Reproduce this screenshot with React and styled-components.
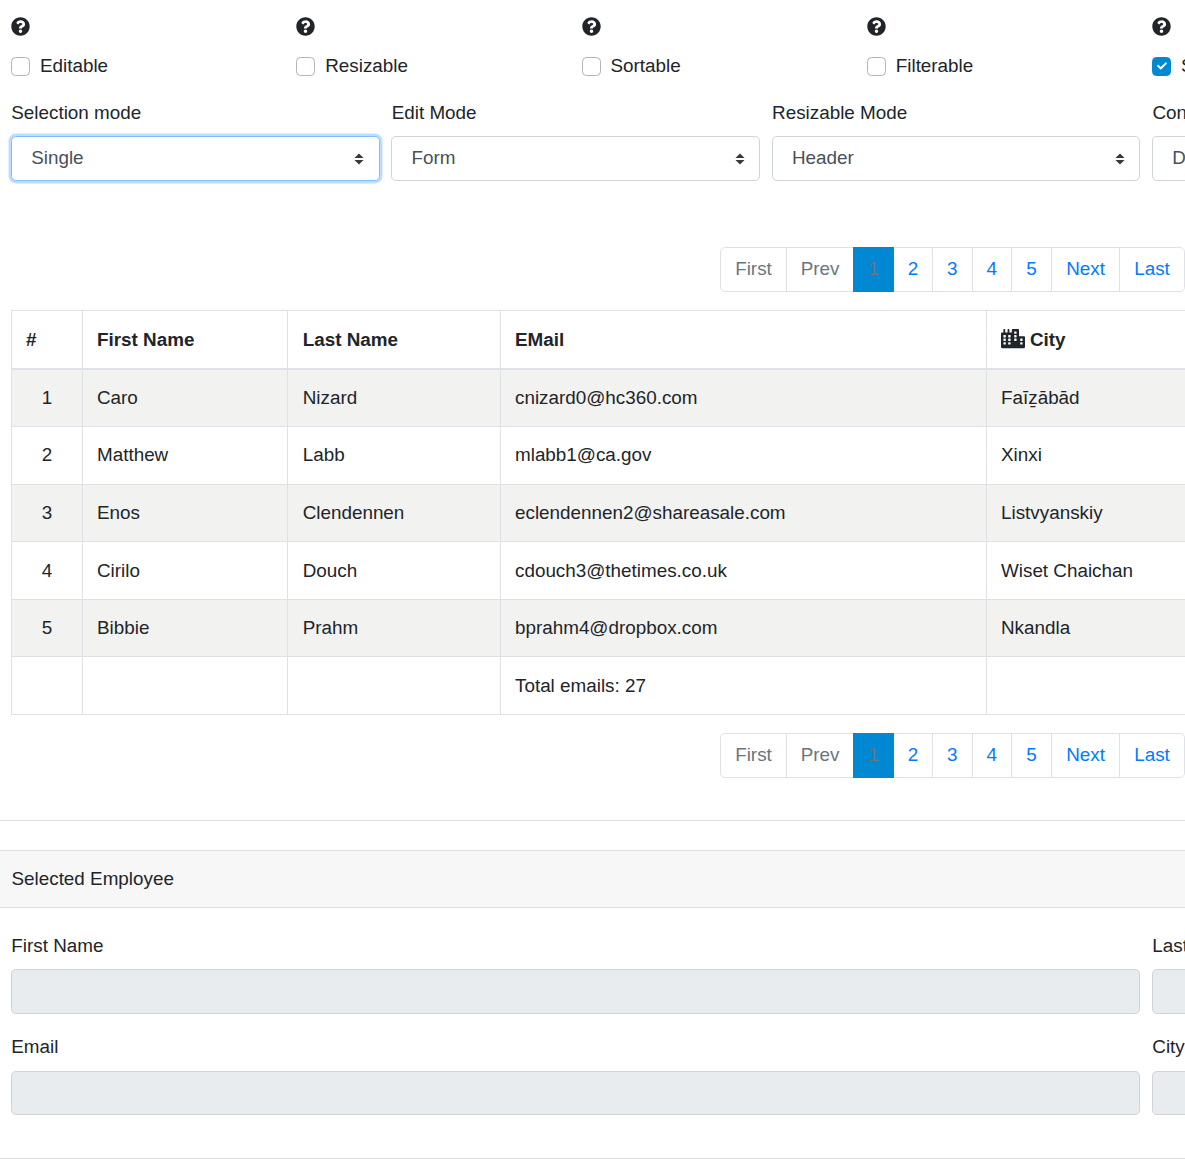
import React from "react";
import styled, { createGlobalStyle } from "styled-components";
import { FaQuestionCircle, FaCity, FaCheck } from "react-icons/fa";

const Global = createGlobalStyle`
  html, body { margin: 0; padding: 0; background: #fff; overflow: hidden; }
  body { font-family: "Liberation Sans", Arial, sans-serif; font-size: 18.85px; line-height: 28.8px; color: #212529; }
`;

const Page = styled.div`
  width: 1185px;
  height: 1166px;
  overflow: hidden;
`;
const OptionGrid = styled.div`
  display: grid;
  grid-template-columns: repeat(6, 285.25px);
  padding: 17px 0 0 11px;
  width: 1711.5px;
`;
const Option = styled.div`
  display: flex;
  flex-direction: column;
  align-items: flex-start;
`;
const Help = styled.span`
  display: flex;
  height: 20px;
  font-size: 19px;
  color: #212529;
  margin-bottom: 14.5px;
`;
const CheckRow = styled.label`
  display: flex;
  align-items: center;
  gap: 10px;
  height: 29px;
`;
const Box = styled.span`
  box-sizing: border-box;
  display: flex;
  align-items: center;
  justify-content: center;
  width: 19px;
  height: 19px;
  border-radius: 4.5px;
  border: 1px solid ${(p) => (p.$on ? "#0088d2" : "#adb5bd")};
  background: ${(p) => (p.$on ? "#0088d2" : "#fff")};
  color: #fff;
  font-size: 10px;
`;
const SelectGrid = styled.div`
  display: grid;
  grid-template-columns: repeat(5, 368.7px);
  column-gap: 11.7px;
  padding: 18px 0 0 11px;
  width: 1900px;
`;
const Field = styled.div`
  display: flex;
  flex-direction: column;
`;
const Label = styled.label`
  display: block;
  height: 29px;
  margin-bottom: 8.5px;
  padding-left: 0.3px;
`;
const Select = styled.div`
  box-sizing: border-box;
  height: 45px;
  display: flex;
  align-items: center;
  justify-content: space-between;
  padding: 0 14.5px 0 19.2px;
  border: 1px solid ${(p) => (p.$focus ? "#80bdff" : "#ced4da")};
  border-radius: 4.8px;
  color: #495057;
  background: #fff;
  box-shadow: ${(p) => (p.$focus ? "0 0 0 2.5px rgba(0,123,255,.25)" : "none")};
`;
const PagerRow = styled.nav`
  display: flex;
  justify-content: flex-end;
  margin-top: ${(p) => p.$top}px;
`;
const PageItem = styled.a`
  box-sizing: border-box;
  width: ${(p) => p.$w}px;
  height: 44.5px;
  display: flex;
  align-items: center;
  justify-content: center;
  border: 1px solid #dee2e6;
  margin-left: -1px;
  background: ${(p) => (p.$active ? "#0088d2" : "#fff")};
  border-color: ${(p) => (p.$active ? "#0088d2" : "#dee2e6")};
  color: ${(p) => (p.$active ? "#6c757d" : p.$off ? "#6c757d" : "#007bff")};
  z-index: ${(p) => (p.$active ? 1 : 0)};
  &:first-child { border-radius: 4.8px 0 0 4.8px; margin-left: 0; }
  &:last-child { border-radius: 0 4.8px 4.8px 0; }
`;
const TableWrap = styled.div`
  margin: 18.5px 0 0 11px;
`;
const Table = styled.table`
  border-collapse: collapse;
  table-layout: fixed;
  width: 1500px;
`;
const Th = styled.th`
  box-sizing: border-box;
  height: 58.5px;
  padding: 1px 14px 0;
  border: 1px solid #dee2e6;
  border-bottom: 2.4px solid #dee2e6;
  text-align: left;
  font-weight: 700;
  font-size: 18.85px;
  background: #fff;
  white-space: nowrap;
  &:nth-child(3) { padding-left: 14.7px; }
`;
const CityIcon = styled.span`
  display: inline-flex;
  vertical-align: -3px;
  margin-right: 5px;
  font-size: 19.2px;
  width: 24px;
  svg { width: 24px; }
`;
const Tr = styled.tr`
  background: ${(p) => (p.$odd ? "#f2f2f0" : "#fff")};
`;
const Td = styled.td`
  box-sizing: border-box;
  height: 57.6px;
  padding: 1px 14px 0;
  border: 1px solid #dee2e6;
  text-align: ${(p) => (p.$center ? "center" : "left")};
  &:nth-child(3) { padding-left: 14.7px; }
`;
const Rule = styled.hr`
  border: 0;
  border-top: 1px solid #dfdfdf;
  margin: ${(p) => p.$top}px 0 0;
  height: 0;
`;
const CardHeader = styled.div`
  box-sizing: border-box;
  height: 58px;
  margin-top: 29px;
  padding: 0 11.5px;
  display: flex;
  align-items: center;
  background: #f7f7f7;
  border-top: 1px solid #dfdfdf;
  border-bottom: 1px solid #dfdfdf;
`;
const FormGrid = styled.div`
  display: grid;
  grid-template-columns: repeat(2, 1129px);
  column-gap: 12px;
  row-gap: 18.5px;
  padding: 24px 0 0 11px;
  width: 2400px;
`;
const FormLabel = styled.label`
  display: block;
  height: 29px;
  margin-bottom: ${(p) => p.$gap}px;
  padding-left: 0.3px;
`;
const ReadOnly = styled.div`
  box-sizing: border-box;
  height: ${(p) => p.$h}px;
  background: #e9ecef;
  border: 1px solid #ced4da;
  border-radius: 4.8px;
`;

const Sort = () => (
  <svg width="10" height="12" viewBox="0 0 10 12" aria-hidden="true">
    <path d="M5 0.5 9.6 5H0.4z M5 11.5 9.6 7H0.4z" fill="#343a40" />
  </svg>
);

const options = [
  ["Editable", false],
  ["Resizable", false],
  ["Sortable", false],
  ["Filterable", false],
  ["Selectable", true],
];
const selects = [
  ["Selection mode", "Single", true],
  ["Edit Mode", "Form", false],
  ["Resizable Mode", "Header", false],
  ["Context Menu", "Disabled", false],
];
const pages = [
  ["First", 67, "off"],
  ["Prev", 68, "off"],
  ["1", 41, "active"],
  ["2", 40],
  ["3", 40.5],
  ["4", 40.5],
  ["5", 41],
  ["Next", 69],
  ["Last", 66],
];
const rows = [
  [1, "Caro", "Nizard", "cnizard0@hc360.com", "Faīẕābād"],
  [2, "Matthew", "Labb", "mlabb1@ca.gov", "Xinxi"],
  [3, "Enos", "Clendennen", "eclendennen2@shareasale.com", "Listvyanskiy"],
  [4, "Cirilo", "Douch", "cdouch3@thetimes.co.uk", "Wiset Chaichan"],
  [5, "Bibbie", "Prahm", "bprahm4@dropbox.com", "Nkandla"],
];
const formFields = [
  ["First Name", 8, 45],
  ["Last Name", 8, 45],
  ["Email", 9, 44],
  ["City", 9, 44],
];

const Pager = ({ top }) => (
  <PagerRow $top={top}>
    {pages.map(([t, w, s]) => (
      <PageItem key={t} $w={w} $off={s === "off"} $active={s === "active"}>
        {t}
      </PageItem>
    ))}
  </PagerRow>
);

export default function App() {
  return (
    <Page>
      <Global />
      <OptionGrid>
        {options.map(([t, on]) => (
          <Option key={t}>
            <Help><FaQuestionCircle /></Help>
            <CheckRow>
              <Box $on={on}>{on && <FaCheck />}</Box>
              {t}
            </CheckRow>
          </Option>
        ))}
      </OptionGrid>
      <SelectGrid>
        {selects.map(([l, v, f]) => (
          <Field key={l}>
            <Label>{l}</Label>
            <Select $focus={f}>
              {v}
              <Sort />
            </Select>
          </Field>
        ))}
      </SelectGrid>
      <Pager top={66} />
      <TableWrap>
        <Table>
          <colgroup>
            <col width="71" />
            <col width="205" />
            <col width="213" />
            <col width="486" />
            <col width="525" />
          </colgroup>
          <thead>
            <tr>
              <Th>#</Th>
              <Th>First Name</Th>
              <Th>Last Name</Th>
              <Th>EMail</Th>
              <Th>
                <CityIcon><FaCity /></CityIcon>City
              </Th>
            </tr>
          </thead>
          <tbody>
            {rows.map((r, i) => (
              <Tr key={r[0]} $odd={i % 2 === 0}>
                <Td $center>{r[0]}</Td>
                <Td>{r[1]}</Td>
                <Td>{r[2]}</Td>
                <Td>{r[3]}</Td>
                <Td>{r[4]}</Td>
              </Tr>
            ))}
            <Tr>
              <Td />
              <Td />
              <Td />
              <Td>Total emails: 27</Td>
              <Td />
            </Tr>
          </tbody>
        </Table>
      </TableWrap>
      <Pager top={18} />
      <Rule $top={42.5} />
      <CardHeader>Selected Employee</CardHeader>
      <FormGrid>
        {formFields.map(([l, gap, h]) => (
          <Field key={l}>
            <FormLabel $gap={gap}>{l}</FormLabel>
            <ReadOnly $h={h} />
          </Field>
        ))}
      </FormGrid>
      <Rule $top={43} />
    </Page>
  );
}
